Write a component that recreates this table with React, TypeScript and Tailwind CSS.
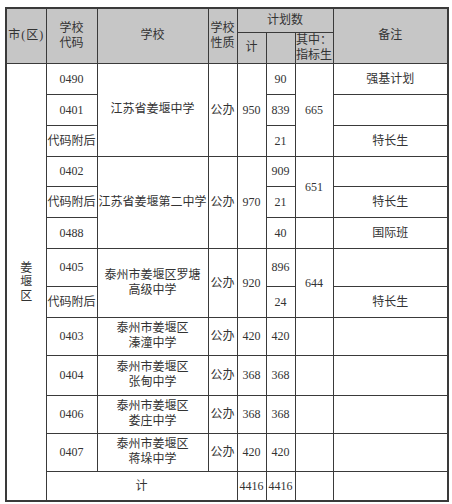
import React from "react";

const cell = "border border-[#3a3a3a] p-0 text-center align-middle";
const head = `${cell} bg-[#c6c6c6] font-normal`;

type School = {
  rows: { code: string; plan: string; note?: string }[];
  name: React.ReactNode;
  total: string;
  quota: { text: string; span: number }[];
  h: number[];
};

const schools: School[] = [
  {
    name: "江苏省姜堰中学",
    total: "950",
    rows: [
      { code: "0490", plan: "90", note: "强基计划" },
      { code: "0401", plan: "839" },
      { code: "代码附后", plan: "21", note: "特长生" },
    ],
    quota: [{ text: "665", span: 3 }],
    h: [31, 31, 31],
  },
  {
    name: "江苏省姜堰第二中学",
    total: "970",
    rows: [
      { code: "0402", plan: "909" },
      { code: "代码附后", plan: "21", note: "特长生" },
      { code: "0488", plan: "40", note: "国际班" },
    ],
    quota: [
      { text: "651", span: 2 },
      { text: "", span: 1 },
    ],
    h: [30, 31, 31],
  },
  {
    name: (
      <>
        泰州市姜堰区罗塘
        <br />
        高级中学
      </>
    ),
    total: "920",
    rows: [
      { code: "0405", plan: "896" },
      { code: "代码附后", plan: "24", note: "特长生" },
    ],
    quota: [{ text: "644", span: 2 }],
    h: [38, 31],
  },
];

const small = [
  { code: "0403", town: "溱潼中学", n: "420", h: 38 },
  { code: "0404", town: "张甸中学", n: "368", h: 40 },
  { code: "0406", town: "娄庄中学", n: "368", h: 38 },
  { code: "0407", town: "蒋垛中学", n: "420", h: 38 },
];

// which quota cell starts at row index ri
function quotaAt(s: School, ri: number) {
  let start = 0;
  for (const q of s.quota) {
    if (start === ri) return q;
    start += q.span;
  }
  return undefined;
}

export default function App() {
  let first = true;
  const body: React.ReactNode[] = [];

  schools.forEach((s, si) => {
    s.rows.forEach((r, ri) => {
      const q = quotaAt(s, ri);
      body.push(
        <tr key={`${si}-${ri}`} style={{ height: s.h[ri] }}>
          {first && (
            <td rowSpan={13} className={cell}>
              <div className="flex flex-col items-center leading-[14px]">
                <span>姜</span>
                <span>堰</span>
                <span>区</span>
              </div>
            </td>
          )}
          <td className={`${cell} whitespace-nowrap`}>{r.code}</td>
          {ri === 0 && (
            <>
              <td rowSpan={s.rows.length} className={`${cell} leading-[15px] whitespace-nowrap`}>
                {s.name}
              </td>
              <td rowSpan={s.rows.length} className={cell}>
                公办
              </td>
              <td rowSpan={s.rows.length} className={cell}>
                {s.total}
              </td>
            </>
          )}
          <td className={cell}>{r.plan}</td>
          {q && (
            <td rowSpan={q.span} className={cell}>
              {q.text}
            </td>
          )}
          <td className={cell}>{r.note ?? ""}</td>
        </tr>
      );
      first = false;
    });
  });

  small.forEach((s) => {
    body.push(
      <tr key={s.code} style={{ height: s.h }}>
        <td className={cell}>{s.code}</td>
        <td className={`${cell} leading-[15px]`}>
          泰州市姜堰区
          <br />
          {s.town}
        </td>
        <td className={cell}>公办</td>
        <td className={cell}>{s.n}</td>
        <td className={cell}>{s.n}</td>
        <td className={cell}></td>
        <td className={cell}></td>
      </tr>
    );
  });

  return (
    <div
      className="w-[452px] h-[504px] bg-white pt-[7px] pl-[5px] text-[12px] text-[#333]"
      style={{ fontFamily: '"Liberation Serif", "Noto Sans CJK SC", serif' }}
    >
      <table className="table-fixed border-collapse border-2 border-[#3a3a3a] w-[442px]">
        <colgroup>
          <col className="w-[40px]" />
          <col className="w-[51px]" />
          <col className="w-[111px]" />
          <col className="w-[29px]" />
          <col className="w-[29px]" />
          <col className="w-[29px]" />
          <col className="w-[38px]" />
          <col className="w-[115px]" />
        </colgroup>
        <thead className="leading-[15px]">
          <tr className="h-[24px]">
            <th rowSpan={2} className={`${head} whitespace-nowrap tracking-[1px]`}>
              市(区)
            </th>
            <th rowSpan={2} className={head}>
              学校
              <br />
              代码
            </th>
            <th rowSpan={2} className={head}>
              学校
            </th>
            <th rowSpan={2} className={head}>
              学校
              <br />
              性质
            </th>
            <th colSpan={3} className={head}>
              计划数
            </th>
            <th rowSpan={2} className={head}>
              备注
            </th>
          </tr>
          <tr className="h-[30px]">
            <th className={head}>计</th>
            <th className={head}></th>
            <th className={`${head} whitespace-nowrap`}>
              其中：
              <br />
              指标生
            </th>
          </tr>
        </thead>
        <tbody>
          {body}
          <tr className="h-[30px]">
            <td colSpan={3} className={cell}>
              计
            </td>
            <td className={cell}>4416</td>
            <td className={cell}>4416</td>
            <td className={cell}></td>
            <td className={cell}></td>
          </tr>
        </tbody>
      </table>
    </div>
  );
}
